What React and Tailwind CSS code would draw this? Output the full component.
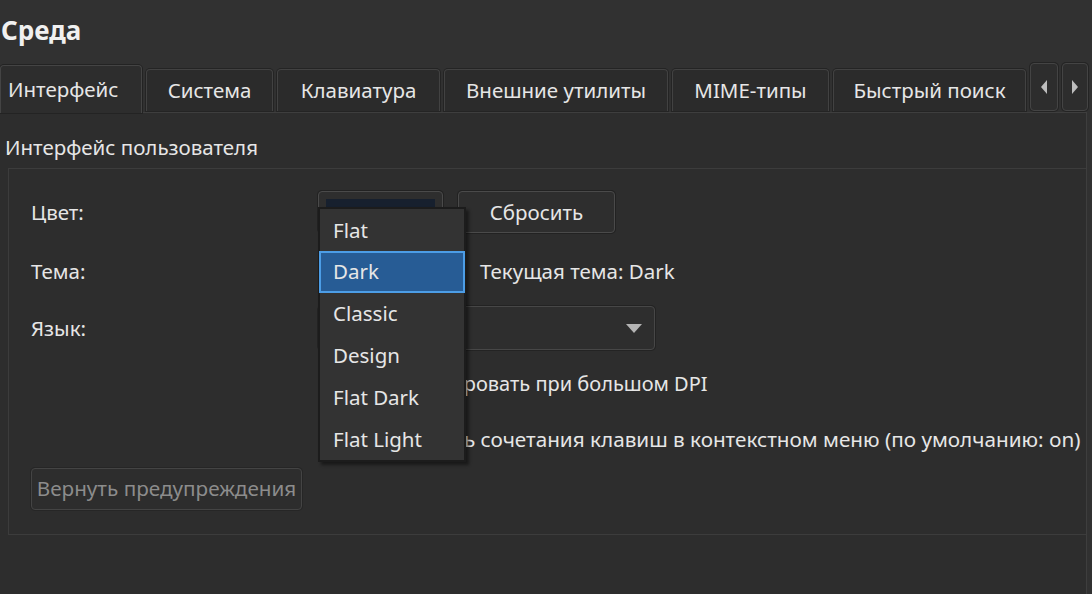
import React from 'react';

const tabs = [
  { label: 'Система', w: 'w-[127px]' },
  { label: 'Клавиатура', w: 'w-[163px]' },
  { label: 'Внешние утилиты', w: 'w-[224px]' },
  { label: 'MIME-типы', w: 'w-[157px]' },
  { label: 'Быстрый поиск', w: 'w-[193px]' },
];

const themes = ['Flat', 'Dark', 'Classic', 'Design', 'Flat Dark', 'Flat Light'];

const Arrow = ({ dir }) => (
  <svg width="10" height="16" viewBox="0 0 10 16">
    {dir === 'left' ? (
      <path d="M8 1 L2 8 L8 15 Z" fill="#bdbdbd" />
    ) : (
      <path d="M2 1 L8 8 L2 15 Z" fill="#bdbdbd" />
    )}
  </svg>
);

// the start of each label sits under the open theme popup
const Checkbox = ({ hidden, label, className }) => (
  <div className="flex items-center h-[30px]">
    <div className="w-[20px] h-[20px] ml-[4px] rounded-[3px] border border-[#555] bg-[#2a2a2a]" />
    <span className={`whitespace-nowrap ${className}`}>
      <span className="invisible">{hidden}</span>
      {label}
    </span>
  </div>
);

const App = () => {
  return (
    <div
      className="w-[1092px] h-[594px] overflow-hidden bg-[#313131] text-[#e6e6e6] text-[20.5px]"
      style={{ fontFamily: '"Noto Sans", "Open Sans", sans-serif' }}
    >
      {/* title */}
      <div className="h-[64px] pl-[1px] pt-[12px]">
        <h1 className="text-[26px] font-bold leading-[36px] text-[#f0f0f0]">Среда</h1>
      </div>

      {/* tab bar */}
      <div className="flex items-end gap-[4px] h-[48px] relative z-10">
        <div className="w-[142px] h-[48px] -mb-px bg-[#2d2d2d] border border-b-0 border-[#444] rounded-t-[4px] shadow-[0_0_0_1px_#232323] flex items-center pl-[7px]">
          Интерфейс
        </div>
        {tabs.map((t) => (
          <div
            key={t.label}
            className={`${t.w} h-[42px] mb-px bg-[#2b2b2b] border border-b-0 border-[#424242] rounded-t-[4px] shadow-[0_0_0_1px_#242424] flex items-center justify-center`}
          >
            {t.label}
          </div>
        ))}
        <div className="w-[28px] h-[48px] mb-px border border-[#444] rounded-[4px] shadow-[0_0_0_1px_#242424] bg-[#2d2d2d] flex items-center justify-center">
          <Arrow dir="left" />
        </div>
        <div className="w-[26px] h-[48px] mb-px border border-[#444] rounded-[4px] shadow-[0_0_0_1px_#242424] bg-[#2d2d2d] flex items-center justify-center">
          <Arrow dir="right" />
        </div>
      </div>

      {/* tab pane */}
      <div className="w-[1087px] h-[483px] bg-[#2d2d2d] border-t border-r border-[#3e3e3e]">
        <div className="pl-[5px] mt-[20px] leading-[28px]">Интерфейс пользователя</div>

        <div className="relative ml-[8px] mt-[7px] h-[367px] border-l border-t border-b border-[#3c3c3c] pl-[22px] flex flex-col">
          {/* Цвет */}
          <div className="flex items-center mt-[22px] h-[42px]">
            <div className="w-[287px]">Цвет:</div>
            <div className="w-[125px] h-[42px] rounded-[4px] border border-[#4a4a4a] shadow-[0_0_0_1px_#222] bg-[#2e2e2e] p-[7px]">
              <div className="w-full h-full bg-[#17202e]" />
            </div>
            <button className="ml-[15px] w-[157px] h-[42px] rounded-[4px] border border-[#4a4a4a] shadow-[0_0_0_1px_#222] bg-[#2e2e2e] text-[#e6e6e6]">
              Сбросить
            </button>
          </div>

          {/* Тема */}
          <div className="flex items-center mt-[17px] h-[42px]">
            <div className="w-[287px]">Тема:</div>
            <div className="w-[148px] h-[42px] rounded-[4px] border border-[#4a4a4a] bg-[#2e2e2e]" />
            <div className="ml-[14px]">Текущая тема: Dark</div>
          </div>

          {/* Язык */}
          <div className="flex items-center mt-[14px] h-[44px]">
            <div className="w-[287px]">Язык:</div>
            <div className="w-[337px] h-[44px] rounded-[4px] border border-[#474747] shadow-[0_0_0_1px_#232323] bg-[#2e2e2e] flex items-center justify-end pr-[12px]">
              <svg width="16" height="9" viewBox="0 0 16 9">
                <path d="M0 0 L16 0 L8 9 Z" fill="#b4b4b4" />
              </svg>
            </div>
          </div>

          <div className="mt-[19px] pl-[287px]">
            <Checkbox hidden="Масштаби" label="ровать при большом DPI" className="ml-[20px] text-[20px]" />
          </div>
          <div className="mt-[26px] pl-[287px]">
            <Checkbox
              hidden="Показыват"
              label="ь сочетания клавиш в контекстном меню (по умолчанию: on)"
              className="ml-[14px] text-[20.7px]"
            />
          </div>

          <div className="mt-[13px]">
            <button className="w-[271px] h-[42px] rounded-[4px] border border-[#444] shadow-[0_0_0_1px_#262626] bg-[#2d2d2d] text-[#8c8c8c] text-[20.7px]">
              Вернуть предупреждения
            </button>
          </div>

          {/* theme popup */}
          <div className="absolute left-[309px] top-[38px] w-[148px] h-[255px] bg-[#333333] border-2 border-[#1c1c1c] shadow-[3px_3px_3px_rgba(0,0,0,0.45)] flex flex-col z-20">
            {themes.map((th) => (
              <div
                key={th}
                className={
                  th === 'Dark'
                    ? 'h-[42px] flex items-center pl-[12px] bg-[#275c95] border-2 border-[#4c9de6] -mx-px'
                    : 'h-[42px] flex items-center pl-[13px]'
                }
              >
                {th}
              </div>
            ))}
          </div>
        </div>
      </div>
    </div>
  );
};

export default App;
